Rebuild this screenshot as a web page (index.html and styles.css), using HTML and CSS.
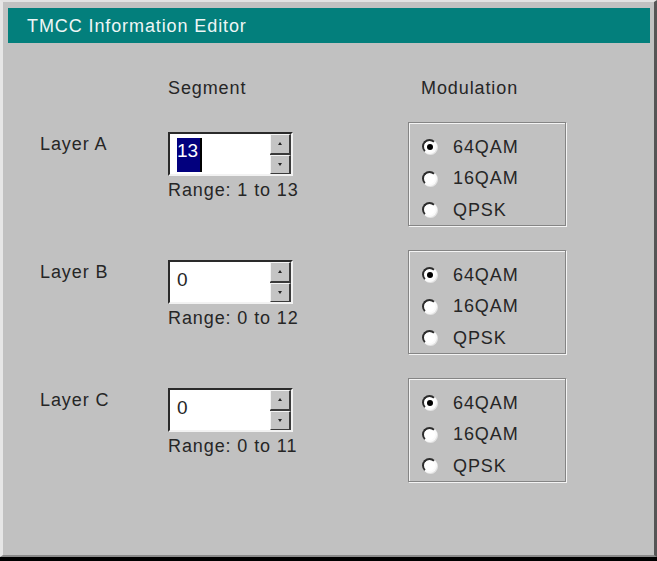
FILE: index.html
```html
<!DOCTYPE html>
<html>
<head>
<meta charset="utf-8">
<title>TMCC Information Editor</title>
<link rel="stylesheet" href="styles.css">
</head>
<body>
<div class="window">
  <div class="titlebar"><span class="title">TMCC Information Editor</span></div>
  <div class="content">
    <div class="grid">
      <div></div>
      <div class="hdr">Segment</div>
      <div class="hdr mod">Modulation</div>

      <div class="layer">Layer A</div>
      <div class="seg">
        <div class="spin">
          <div class="field"><span class="sel">13</span><span class="caret"></span></div>
          <div class="btns"><div class="btn"><span class="arr up"></span></div><div class="btn"><span class="arr down"></span></div></div>
        </div>
        <div class="range">Range: 1 to 13</div>
      </div>
      <div class="group">
        <div class="opt"><span class="radio on"></span>64QAM</div>
        <div class="opt"><span class="radio"></span>16QAM</div>
        <div class="opt"><span class="radio"></span>QPSK</div>
      </div>

      <div class="layer">Layer B</div>
      <div class="seg">
        <div class="spin">
          <div class="field"><span class="val">0</span></div>
          <div class="btns"><div class="btn"><span class="arr up"></span></div><div class="btn"><span class="arr down"></span></div></div>
        </div>
        <div class="range">Range: 0 to 12</div>
      </div>
      <div class="group">
        <div class="opt"><span class="radio on"></span>64QAM</div>
        <div class="opt"><span class="radio"></span>16QAM</div>
        <div class="opt"><span class="radio"></span>QPSK</div>
      </div>

      <div class="layer">Layer C</div>
      <div class="seg">
        <div class="spin">
          <div class="field"><span class="val">0</span></div>
          <div class="btns"><div class="btn"><span class="arr up"></span></div><div class="btn"><span class="arr down"></span></div></div>
        </div>
        <div class="range">Range: 0 to 11</div>
      </div>
      <div class="group">
        <div class="opt"><span class="radio on"></span>64QAM</div>
        <div class="opt"><span class="radio"></span>16QAM</div>
        <div class="opt"><span class="radio"></span>QPSK</div>
      </div>
    </div>
  </div>
</div>
</body>
</html>
```
FILE: styles.css
```css
html, body {
  margin: 0;
  padding: 0;
  background: #000;
}
body {
  width: 657px;
  height: 561px;
  overflow: hidden;
  font-family: "Liberation Sans", Arial, sans-serif;
}
.window {
  box-sizing: border-box;
  width: 657px;
  height: 557px;
  background: #c1c1c1;
  border-top: 2px solid #e2e2e2;
  border-left: 3px solid #e6e6e6;
  border-right: 3px solid #555;
  border-bottom: 2px solid #8a8a8a;
  padding: 6px 4px 0 5px;
}
.titlebar {
  height: 35px;
  background: #037f7c;
  display: flex;
  align-items: center;
  padding-left: 19px;
}
.title {
  color: #eef6f6;
  font-size: 18px;
  letter-spacing: 0.9px;
  position: relative;
  top: 1px;
}
.content {
  padding: 35px 0 0 32px;
  color: #262626;
  font-size: 18px;
  letter-spacing: 0.9px;
}
.grid {
  display: grid;
  grid-template-columns: 128px 240px 158px;
  grid-template-rows: 20px 104px 104px 104px;
  row-gap: 24px;
}
.hdr {
  line-height: 20px;
}
.hdr.mod {
  padding-left: 13px;
}
.layer {
  padding-top: 12px;
  line-height: 20px;
}
.seg {
  padding-top: 10px;
}
.spin {
  box-sizing: border-box;
  width: 125px;
  height: 44px;
  display: flex;
  border-top: 2px solid #2a2a2a;
  border-left: 2px solid #2a2a2a;
  border-right: 2px solid #f2f2f2;
  border-bottom: 2px solid #f2f2f2;
  background: #fff;
}
.field {
  flex: 1;
  display: flex;
  align-items: flex-start;
  padding: 4px 0 0 7px;
  font-size: 19px;
  letter-spacing: 0;
}
.sel {
  background: #02007e;
  color: #fff;
  line-height: 26px;
  height: 26px;
  padding-bottom: 8px;
  width: 23px;
}
.caret {
  width: 2px;
  height: 34px;
  background: #000;
}
.val {
  line-height: 26px;
  padding-top: 1px;
}
.btns {
  width: 21px;
  display: flex;
  flex-direction: column;
  gap: 1px;
  background: #3a3a3a;
}
.btn {
  flex: 1;
  box-sizing: border-box;
  background: #c4c4c4;
  border-top: 1px solid #f4f4f4;
  border-left: 1px solid #f4f4f4;
  border-right: 2px solid #3a3a3a;
  border-bottom: 1px solid #3a3a3a;
  display: flex;
  align-items: center;
  justify-content: center;
}
.arr {
  width: 0;
  height: 0;
  border-left: 2px solid transparent;
  border-right: 2px solid transparent;
}
.arr.up {
  border-bottom: 3px solid #222;
}
.arr.down {
  border-top: 3px solid #222;
}
.range {
  margin-top: 4px;
  line-height: 20px;
}
.group {
  box-sizing: border-box;
  height: 104px;
  border: 1px solid #858585;
  box-shadow: 1px 1px 0 #f4f4f4, inset 1px 1px 0 #f4f4f4;
  padding: 8px 0 0 13px;
}
.opt {
  height: 31.5px;
  display: flex;
  align-items: center;
  line-height: 20px;
}
.radio {
  box-sizing: border-box;
  width: 15px;
  height: 15px;
  border-radius: 50%;
  margin-right: 16px;
  background: #fff;
  border-top: 2px solid #2c2c2c;
  border-left: 2px solid #2c2c2c;
  border-right: 2px solid #fafafa;
  border-bottom: 2px solid #fafafa;
  box-shadow: 1px 1px 0 0 #e4e4e4;
  display: flex;
  align-items: center;
  justify-content: center;
}
.radio.on::after {
  content: "";
  width: 6px;
  height: 6px;
  border-radius: 50%;
  background: #000;
}
```
